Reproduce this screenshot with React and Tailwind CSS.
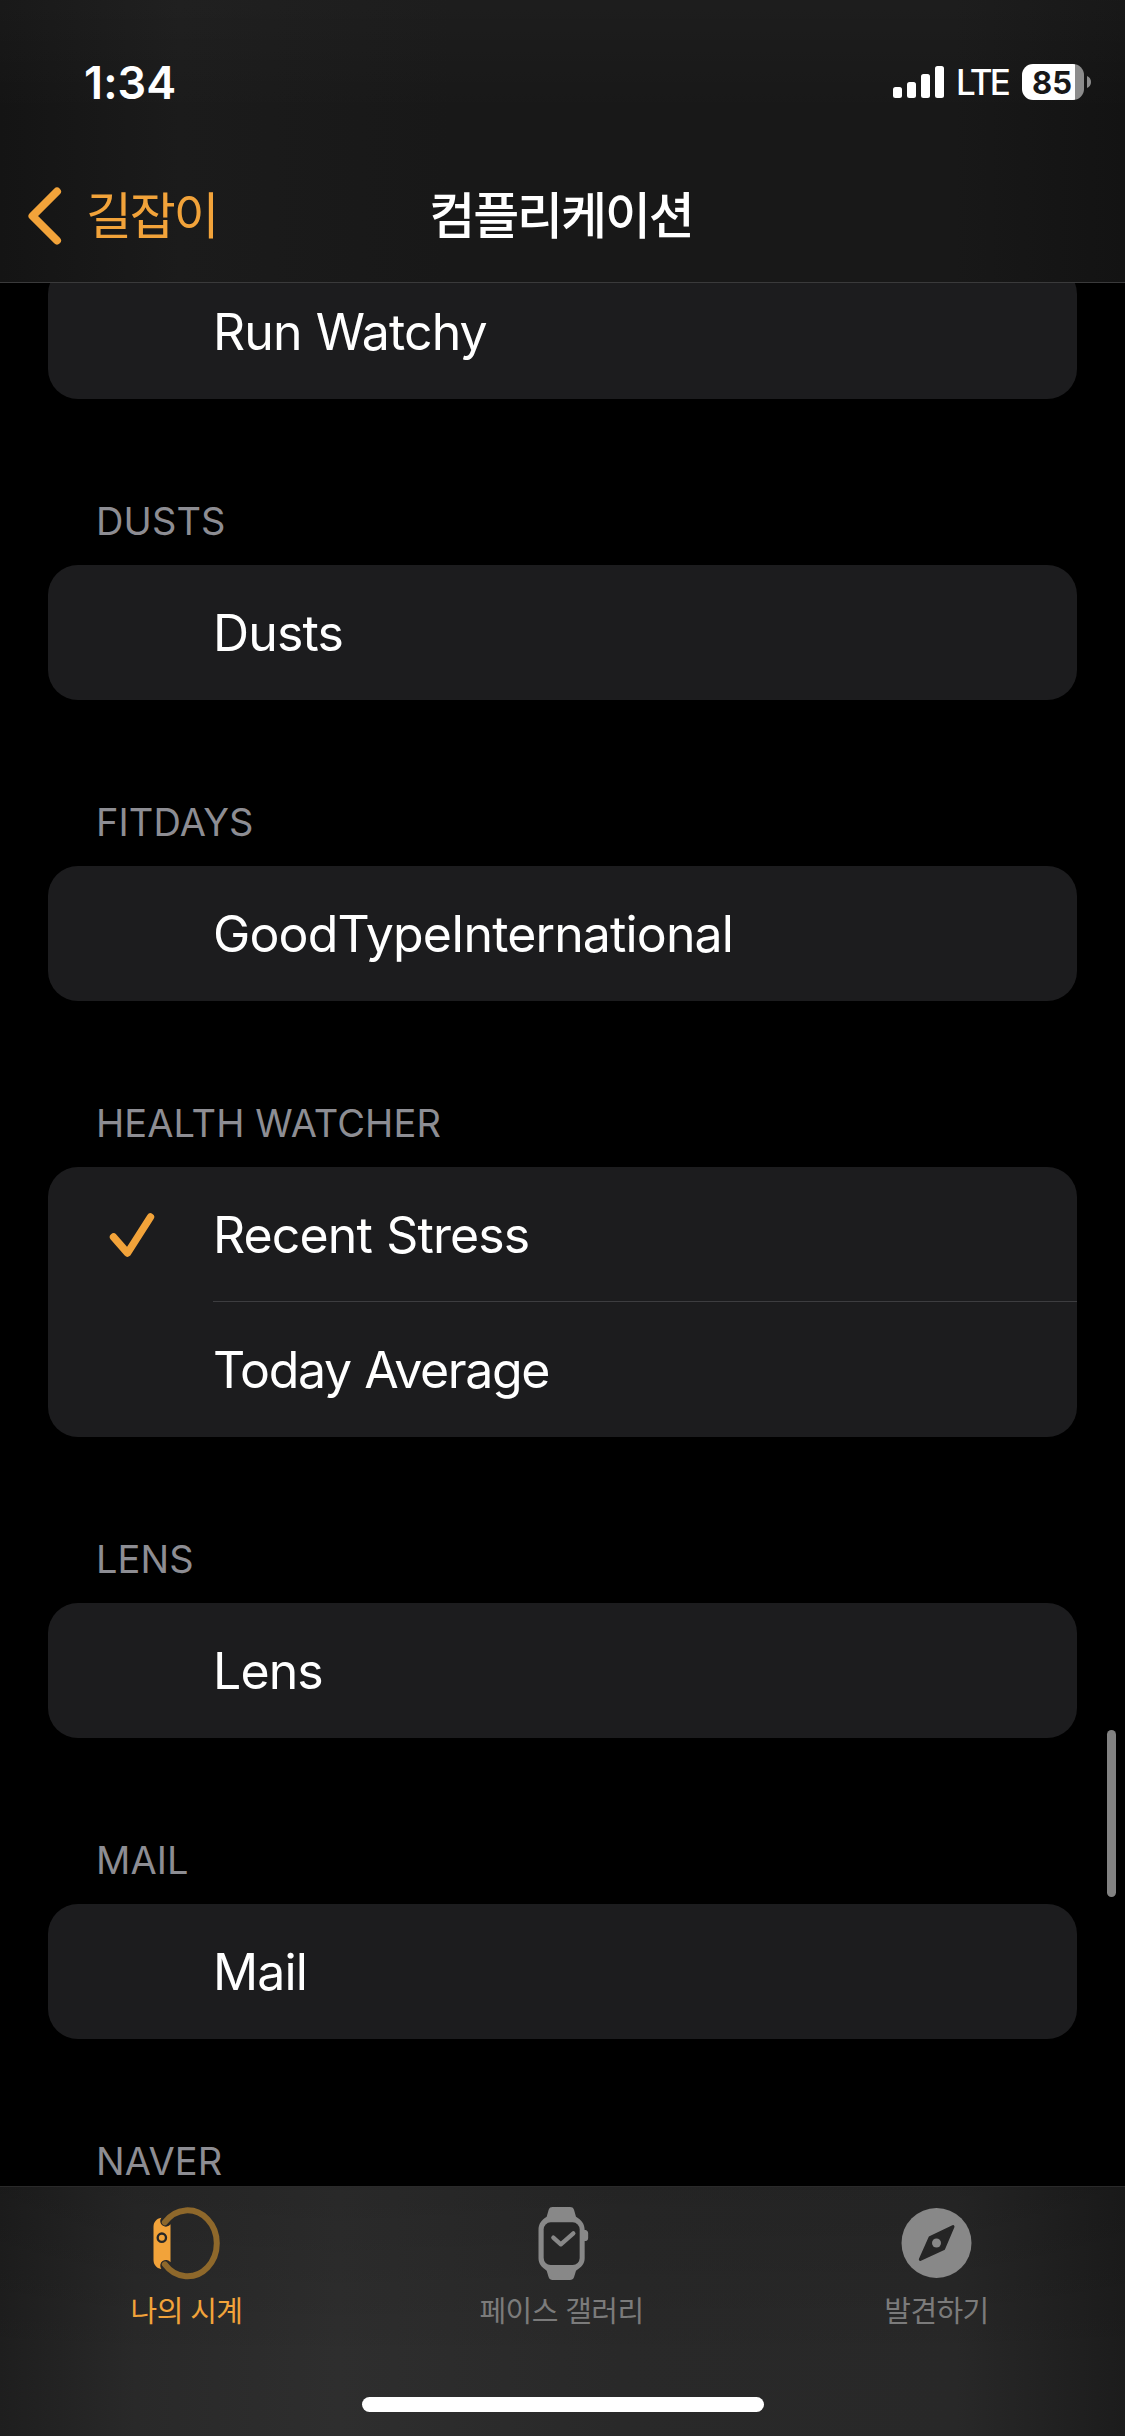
import React from 'react'
import clsx from 'clsx'

const ORANGE = '#f2a33a'

const sections = [
  { items: [{ name: 'Run Watchy' }] },
  { title: 'DUSTS', items: [{ name: 'Dusts' }] },
  { title: 'FITDAYS', items: [{ name: 'GoodTypeInternational' }] },
  {
    title: 'HEALTH WATCHER',
    items: [{ name: 'Recent Stress', selected: true }, { name: 'Today Average', tight: true }],
  },
  { title: 'LENS', items: [{ name: 'Lens' }] },
  { title: 'MAIL', items: [{ name: 'Mail' }] },
  { title: 'NAVER', items: [] },
]

const StatusBar = () => (
  <div className="flex h-[141px] items-center pt-[23px] pl-[84px] pr-[34px]">
    <span className="text-[45px] leading-none font-semibold tracking-[0.1px] text-white">1:34</span>
    <div className="ml-auto flex items-center">
      <svg width="51" height="32" viewBox="0 0 51 32" fill="#fff">
        <rect x="0" y="21" width="9" height="11" rx="2.5" />
        <rect x="14" y="16" width="9" height="16" rx="2.5" />
        <rect x="28" y="8" width="9" height="24" rx="2.5" />
        <rect x="42" y="0" width="9" height="32" rx="2.5" />
      </svg>
      <span className="ml-[12px] w-[54px] text-[35px] leading-none font-medium tracking-[-2.8px] text-white">LTE</span>
      <div className="ml-[12px] flex h-9 w-[62px] items-center justify-center rounded-[11px] bg-linear-to-r from-white from-[85.5%] to-[#8c8c8c] to-[85.5%] pr-[2px]">
        <span className="text-[31px] leading-none font-bold text-[#181818]">85</span>
      </div>
      <svg className="ml-[3px]" width="4" height="12" viewBox="0 0 4 12">
        <path d="M0 0C2.5 1 4 3.3 4 6S2.5 11 0 12Z" fill="#8c8c8c" />
      </svg>
    </div>
  </div>
)

const NavBar = () => (
  <div className="grid h-[141px] grid-cols-3 items-center pt-[9px]">
    <div className="flex items-center pl-[28px]" style={{ color: ORANGE }}>
      <svg width="34" height="58" viewBox="0 0 34 58" fill="none">
        <path d="M29 4.5L4.5 29L29 53.5" stroke="currentColor" strokeWidth="8" strokeLinecap="round" strokeLinejoin="round" />
      </svg>
      <span className="ml-[24px] text-[50px] leading-none tracking-[-2.2px]">길잡이</span>
    </div>
    <h1 className="-ml-[3px] text-center text-[50px] leading-none font-medium tracking-[-2.1px] whitespace-nowrap text-white">
      컴플리케이션
    </h1>
  </div>
)

const Row = ({ item, divided }) => (
  <li className="flex h-[135px]">
    <div className="flex w-[165px] shrink-0 items-center pl-[61px]">
      {item.selected && (
        <svg width="46" height="44" viewBox="0 0 46 44" fill="none">
          <path d="M4.5 24L18.5 40L41.5 4" stroke={ORANGE} strokeWidth="7.4" strokeLinecap="round" strokeLinejoin="round" />
        </svg>
      )}
    </div>
    <div
      className={clsx(
        'flex flex-1 items-center text-[50px] leading-none [word-spacing:1px] text-white',
        item.tight ? 'tracking-[-1.35px]' : 'tracking-[-0.87px]',
        divided && 'border-b border-[#3d3d40] pt-[2px]'
      )}
    >
      {item.name}
    </div>
  </li>
)

const Section = ({ title, items }) => (
  <section>
    {title && (
      <h2 className="flex h-[166px] items-end pb-[25px] pl-[48px] text-[38px] leading-none tracking-[0.1px] text-[#8d8d93]">
        {title}
      </h2>
    )}
    <ul className="overflow-hidden rounded-[30px] bg-[#1c1c1e]">
      {items.map((item, i) => (
        <Row key={item.name} item={item} divided={i < items.length - 1} />
      ))}
    </ul>
  </section>
)

const MyWatchIcon = () => (
  <svg className="-ml-px" width="80" height="78" viewBox="0 0 240 234" fill="none">
    <path
      d="M43 41C28 43 19.500 55 19.500 68V168C19.500 181 28 193 43 195A16 16 0 1 1 70.500 175V61A16 16 0 1 1 43 41Z"
      fill={ORANGE}
    />
    <path d="M53.500 55A88 99 0 1 1 53.500 181" stroke="#8e682b" strokeWidth="18" strokeLinecap="round" />
    <circle cx="44.500" cy="101" r="12.500" stroke="#272727" strokeWidth="7" />
  </svg>
)

const FaceGalleryIcon = () => (
  <svg className="-ml-px" width="80" height="78" viewBox="0 0 240 234" fill="none">
    <path
      d="M92 9H144C150 9 154 11 156 17L162 38C178 48 188 58 188 78H191C196 79 198.500 84 198.500 88V101C198.500 106 196 110 191 111H188V163C188 180 178 190 162 200L156 220C154 226 150 228 144 228H92C86 228 82 226 80 220L74 200C59 190 49.500 180 49.500 163V78C49.500 58 59 48 74 38L80 17C82 11 86 9 92 9Z"
      fill="#888"
    />
    <rect x="65" y="55" width="108" height="128" rx="21" fill="#252525" />
    <path d="M94 101L116.500 121L154 88" stroke="#888" strokeWidth="13" strokeLinecap="round" strokeLinejoin="round" />
  </svg>
)

const DiscoverIcon = () => (
  <svg className="-ml-px" width="80" height="78" viewBox="0 0 240 234" fill="none">
    <circle cx="118.500" cy="117" r="105" fill="#888" />
    <path
      d="M168 68L140 134L70 166L99 101Z"
      fill="#252525"
      stroke="#252525"
      strokeWidth="9"
      strokeLinejoin="round"
    />
    <circle cx="118.500" cy="117" r="13.500" fill="#888" />
  </svg>
)

const tabs = [
  { label: '나의 시계', Icon: MyWatchIcon, active: true },
  { label: '페이스 갤러리', Icon: FaceGalleryIcon },
  { label: '발견하기', Icon: DiscoverIcon },
]

const TabBar = () => (
  <nav className="flex h-[250px] shrink-0 flex-col border-t border-[#2a2a2a] bg-[linear-gradient(to_bottom,rgba(0,0,0,0.12),transparent_70%),linear-gradient(to_right,#1e1e1e,#292929_12%,#2e2e2e_30%,#292929_55%,#282828_85%,#1c1c1c)]">
    <div className="grid grid-cols-3 pt-[17px]">
      {tabs.map(({ label, Icon, active }) => (
        <div key={label} className="flex flex-col items-center">
          <Icon />
          <span
            className={clsx(
              'mt-[15px] mr-[2px] text-[29px] leading-none tracking-[-0.6px]',
              active ? 'text-[#f2a33a]' : 'text-[#7b7b7b]'
            )}
          >
            {label}
          </span>
        </div>
      ))}
    </div>
    <div className="mx-auto mt-auto mb-[24px] h-[15px] w-[402px] rounded-full bg-white" />
  </nav>
)

export default function App() {
  return (
    <div className="relative flex h-[2436px] w-[1125px] flex-col overflow-hidden bg-black font-['Inter','Noto_Sans_CJK_KR',sans-serif]">
      <header className="h-[283px] shrink-0 border-b border-[#3a3a3b] bg-[linear-gradient(to_bottom,rgba(255,255,255,0.025),transparent_40%),linear-gradient(to_right,#141414,#1b1b1b_16%,#181818_40%,#181818_85%,#131313)]">
        <StatusBar />
        <NavBar />
      </header>

      <main className="min-h-0 flex-1 overflow-hidden px-[48px]">
        <div className="-mt-[19px]">
          {sections.map((section) => (
            <Section key={section.items[0]?.name ?? section.title} {...section} />
          ))}
        </div>
      </main>

      <TabBar />

      {/* scroll indicator */}
      <div className="absolute top-[1730px] right-[9px] h-[167px] w-[9px] rounded-full bg-[#828282]" />
    </div>
  )
}
